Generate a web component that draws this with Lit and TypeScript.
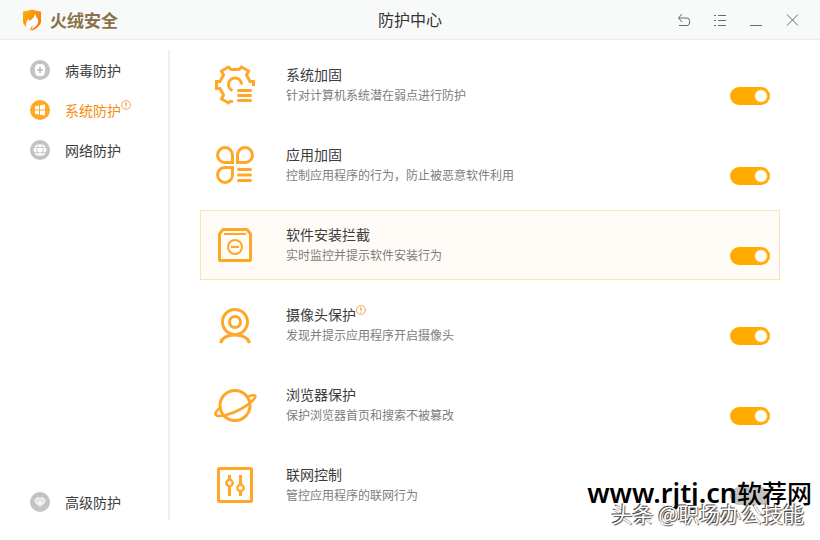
import { LitElement, html, css, svg } from "lit";
import { customElement, state } from "lit/decorators.js";
import { classMap } from "lit/directives/class-map.js";

const navGlyphs: Record<string, unknown> = {
  virus: svg`<rect x="5" y="4" width="10" height="12" rx="4" fill="#fff"/><path d="M10 7v6M7 10h6" stroke="#b9b9b9" stroke-width="1.600"/>`,
  system: svg`<path d="M5 6.200l4-.7v4H5zM10 5.300l5-.8v5h-5zM5 10.500h4v4l-4-.7zM10 10.500h5v5l-5-.8z" fill="#fff"/>`,
  network: svg`<circle cx="10" cy="10" r="6.300" fill="#fff"/><ellipse cx="10" cy="10" rx="3" ry="6.500" fill="none" stroke="#c3c3c3" stroke-width=".8"/><path d="M3 7.500h14M3 12.500h14" stroke="#c3c3c3" stroke-width=".8"/>`,
  advanced: svg`<path d="M6.500 5.500h7L16 9l-6 6.500L4 9z" fill="#fff"/><path d="M4 9h12M7 9l3 6 3-6M6.500 6L8 9l2-3 2 3 1.500-3" fill="none" stroke="#c3c3c3" stroke-width=".6"/>`,
};

const featureGlyphs: Record<string, unknown> = {
  gear: svg`<path d="M18 36.500H15L13.500 38 6.500 34 8.500 30 5 23.500H1.500V16.500H5L8.500 10 6.500 6 13.500 2 16 4.500H24L26.500 2 33.500 6 31.500 10 35 16.500H38.500V21"/><path d="M17.500 25.500A6.500 6.500 0 1 1 26.500 19.500"/><path d="M23.500 25.500h12M23.500 30.500h12M23.500 35.500h12" stroke-linecap="round"/>`,
  clover: svg`<path d="M17.500 17.500H11A7.500 7.500 0 1 1 17.500 10zM22.500 17.500H29A7.500 7.500 0 1 0 22.500 10zM17.500 22.500H11A7.500 7.500 0 1 0 17.500 29z"/><path d="M23.500 24.500h12M23.500 30h12M23.500 35.500h12" stroke-linecap="round"/>`,
  box: svg`<path d="M8 4.500H32L35.500 9V35Q35.500 35.500 35 35.500H5Q4.500 35.500 4.500 35V9Z" stroke-linejoin="round"/><path d="M9 9h22" stroke-width="2"/><circle cx="20" cy="22" r="7" stroke-width="2"/><path d="M16 22h8" stroke-width="2"/>`,
  camera: svg`<circle cx="20" cy="17" r="12.500"/><circle cx="20" cy="17" r="5.500"/><path d="M5.500 38C7 33 12 30 20 30S33 33 34.500 38"/>`,
  planet: svg`<circle cx="20" cy="20.500" r="15"/><path d="M6 22C1 26 -1 29 1.500 30.500C5 32 17 29 26 24C36 18.500 42 12 40 10.500Q38.500 9.500 33 11.500" stroke-width="2.600"/>`,
  sliders: svg`<rect x="3.500" y="3.500" width="33" height="33" rx="1"/><path d="M14.500 10v5M14.500 21v10M25.500 10v10M25.500 26v5"/><circle cx="14.500" cy="18" r="3.200" stroke-width="2.400"/><circle cx="25.500" cy="23" r="3.200" stroke-width="2.400"/>`,
};

const noticeMark = svg`<svg class="notice" viewBox="0 0 10 10" aria-hidden="true"><circle cx="5" cy="5" r="4.400" fill="none" stroke="currentColor" stroke-width=".9"/><path d="M5 2.300v3.500M5 6.700v1" stroke="currentColor" stroke-width="1.300"/></svg>`;

interface Feature {
  glyph: string;
  title: string;
  text: string;
  on: boolean;
  notice?: boolean;
  highlighted?: boolean;
}

@customElement("app-root")
export class AppRoot extends LitElement {
  static styles = css`
    :host {
      display: flex;
      flex-direction: column;
      position: relative;
      min-height: 100vh;
      background: #fff;
      color: #3c3c3c;
      font: 400 14px/20px "Noto Sans CJK SC", sans-serif;
    }
    * { box-sizing: border-box; }
    svg { display: block; }
    button { border: 0; padding: 0; background: none; font: inherit; color: inherit; cursor: pointer; }
    h1, h2, p { margin: 0; font: inherit; }
    header {
      display: grid;
      grid-template-columns: 1fr auto 1fr;
      align-items: center;
      height: 40px;
      padding: 0 18px 0 20px;
      background: #f8faf9;
      border-bottom: 1px solid #ebeeed;
    }
    .brand { display: flex; align-items: center; gap: 8px; color: #8b7148; font-size: 17px; font-weight: 700; }
    .shield { width: 22px; height: 24px; }
    h1 { font-size: 16px; color: #333; padding: 0 2px 2px 0; }
    .tools { display: flex; justify-content: flex-end; gap: 16px; }
    .tools svg { width: 20px; height: 20px; fill: none; stroke: #666c69; stroke-width: 1; }
    .body { flex: 1; display: flex; padding: 10px 40px 20px 0; }
    nav { width: 170px; flex: none; display: flex; flex-direction: column; border-right: 2px solid #efefef; padding-left: 30px; }
    .nav-item { display: flex; align-items: center; gap: 15px; height: 40px; text-align: left; }
    .nav-item:last-child { margin-top: auto; height: 36px; }
    .disc { width: 20px; height: 20px; color: #c3c3c3; }
    .active { color: #f58b0a; }
    .active .disc { color: #ffa726; }
    .label { display: flex; align-items: flex-start; }
    .notice { width: 10px; height: 10px; color: #f39a3d; }
    main { flex: 1; padding-left: 30px; display: flex; flex-direction: column; gap: 10px; }
    .feature {
      display: grid;
      grid-template-columns: 42px 1fr 40px;
      column-gap: 29px;
      height: 70px;
      padding: 14px 9px 12px 14px;
      border: 1px solid transparent;
    }
    .highlighted { background: #fffcf7; border-color: #fce3b4; }
    .glyph { width: 42px; height: 40px; overflow: visible; fill: none; stroke: #ffa726; stroke-width: 3; }
    .feature h2 { line-height: 18px; }
    .text { font-size: 12px; line-height: 24px; color: #7d7d7d; }
    .switch {
      appearance: none;
      width: 40px;
      height: 18px;
      margin: 22px 0 0;
      border-radius: 9px;
      background: #c3c3c3;
    }
    .switch:checked { background: #ffab00 radial-gradient(circle at 31px 9px, #fff 5px, transparent 7px); }
    .marks {
      position: absolute;
      right: 8px;
      bottom: 17px;
      display: flex;
      flex-direction: column;
      align-items: flex-end;
      pointer-events: none;
      white-space: nowrap;
    }
    .site { font: 500 25px/20px "Noto Sans CJK SC", sans-serif; color: #000; display: flex; align-items: baseline; }
    .domain { font-family: "Noto Sans", sans-serif; font-size: 27px; font-weight: 600; }
    .author { font: 400 21px/20px "Noto Sans CJK SC", sans-serif; color: #fff; padding-right: 8px; text-shadow: -1px -1px 0 #444, 1px 1px 1px #555; }
  `;

  @state() private current = "system";

  private nav = [
    ["virus", "病毒防护"],
    ["system", "系统防护"],
    ["network", "网络防护"],
    ["advanced", "高级防护"],
  ];

  private features: Feature[] = [
    { glyph: "gear", title: "系统加固", text: "针对计算机系统潜在弱点进行防护", on: true },
    { glyph: "clover", title: "应用加固", text: "控制应用程序的行为，防止被恶意软件利用", on: true },
    { glyph: "box", title: "软件安装拦截", text: "实时监控并提示软件安装行为", on: true, highlighted: true },
    { glyph: "camera", title: "摄像头保护", text: "发现并提示应用程序开启摄像头", on: true, notice: true },
    { glyph: "planet", title: "浏览器保护", text: "保护浏览器首页和搜索不被篡改", on: true },
    { glyph: "sliders", title: "联网控制", text: "管控应用程序的联网行为", on: false },
  ];

  render() {
    return html`
      <header>
        <div class="brand">
          <svg class="shield" viewBox="0 0 22 24" aria-hidden="true">
            <defs><linearGradient id="flame" x1="0" y1="0" x2="1" y2="1"><stop offset="0" stop-color="#ffb400"/><stop offset="1" stop-color="#f36b16"/></linearGradient></defs>
            <path d="M3 3.500Q8 3 12 1.500 16 3 21 3.500V14Q20 19 12 22.500 4 19 3 14z" fill="url(#flame)"/>
            <path d="M15 5.500Q16 9 18 11.500 19 14 17 17L11 22Q13 19 12.500 17L10 21.500Q5 20 6 15.500 7 12 9 10.500V13Q14 11 15 5.500z" fill="#fff"/>
          </svg>
          <span>火绒安全</span>
        </div>
        <h1>防护中心</h1>
        <div class="tools">
          <button aria-label="返回"><svg viewBox="0 0 20 20"><path d="M8 4L4.500 8 8 12M4.500 8H13Q15.500 8 15.500 10.500V13Q15.500 15.500 13 15.500H5"/></svg></button>
          <button aria-label="菜单"><svg viewBox="0 0 20 20"><path d="M4 5.500h2M8 5.500h8M4 10.500h2M8 10.500h8M4 15.500h2M8 15.500h8"/></svg></button>
          <button aria-label="最小化"><svg viewBox="0 0 20 20"><path d="M4 15.500h12"/></svg></button>
          <button aria-label="关闭"><svg viewBox="0 0 20 20"><path d="M5 4.500l11 11M16 4.500l-11 11"/></svg></button>
        </div>
      </header>
      <div class="body">
        <nav>
          ${this.nav.map(([id, name]) => html`
            <button class=${classMap({ "nav-item": true, active: id === this.current })} @click=${() => (this.current = id)}>
              <svg class="disc" viewBox="0 0 20 20" aria-hidden="true"><circle cx="10" cy="10" r="10" fill="currentColor"/>${navGlyphs[id]}</svg>
              <span class="label">${name}${id === "system" ? noticeMark : ""}</span>
            </button>`)}
        </nav>
        <main>
          ${this.features.map((f) => html`
            <section class=${classMap({ feature: true, highlighted: !!f.highlighted })}>
              <svg class="glyph" viewBox="0 0 42 40" aria-hidden="true">${featureGlyphs[f.glyph]}</svg>
              <div>
                <h2><label class="label" for=${f.glyph}>${f.title}${f.notice ? noticeMark : ""}</label></h2>
                <p class="text">${f.text}</p>
              </div>
              <input class="switch" type="checkbox" role="switch" id=${f.glyph} .checked=${f.on} />
            </section>`)}
        </main>
      </div>
      <div class="marks">
        <span class="site"><span class="domain">www.rjtj.cn</span>软荐网</span>
        <span class="author">头条 @职场办公技能</span>
      </div>
    `;
  }
}
